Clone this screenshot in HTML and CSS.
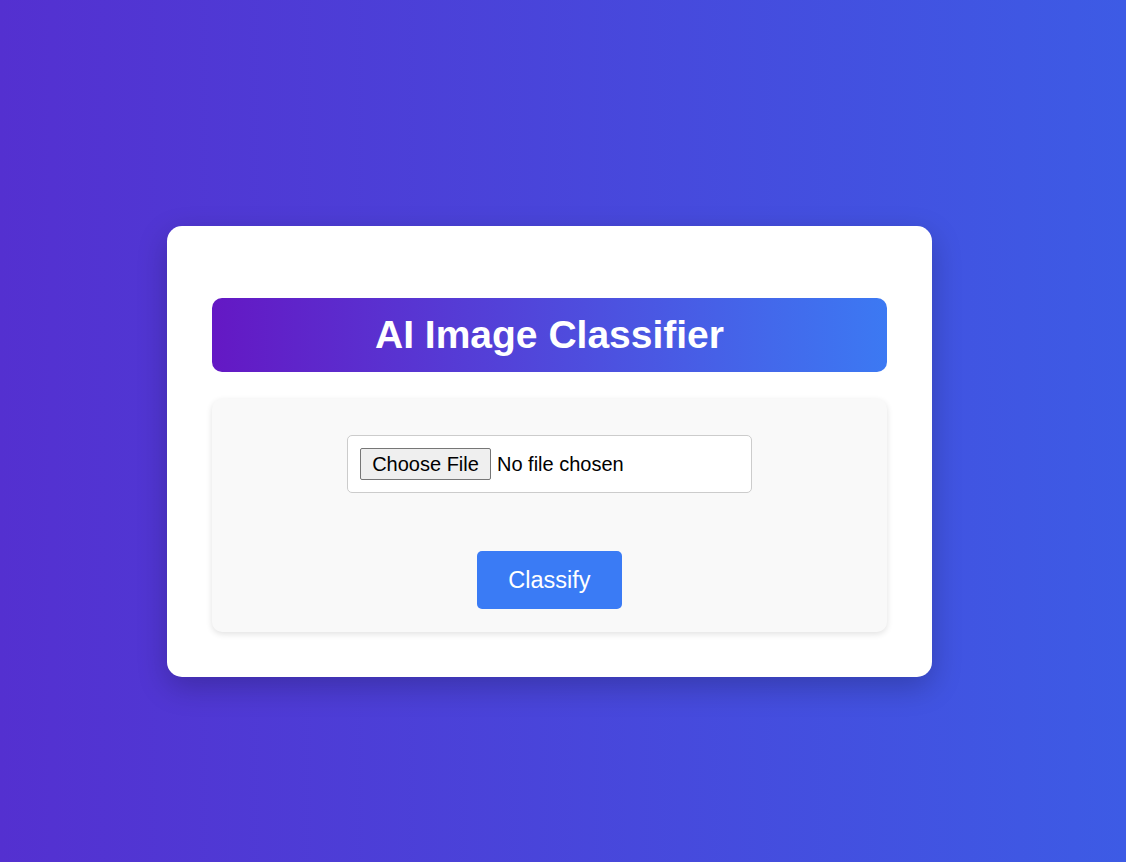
FILE: index.html
```html
<!DOCTYPE html>
<html lang="en">
<head>
<meta charset="utf-8">
<title>AI Image Classifier</title>
<link rel="stylesheet" href="styles.css">
</head>
<body>
<main class="page">
  <section class="card">
    <h1 class="title">AI Image Classifier</h1>
    <form class="upload" onsubmit="return false;">
      <div class="file-box"><input class="file" type="file" accept="image/*"></div>
      <button class="classify" type="submit">Classify</button>
    </form>
  </section>
</main>
</body>
</html>
```

FILE: styles.css
```css
html, body {
  margin: 0;
  height: 100%;
}
body {
  font-family: "Liberation Sans", Arial, sans-serif;
  background: linear-gradient(to right, #5430d0, #3d5be5);
}
.page {
  box-sizing: border-box;
  height: 100%;
  padding: 226px 0 0 167px;
}
.card {
  box-sizing: border-box;
  width: 765px;
  padding: 72px 45px 45px;
  background: #fff;
  border-radius: 15px;
  box-shadow: 0 10px 30px rgba(0, 0, 0, 0.22);
}
.title {
  margin: 0;
  height: 74px;
  display: flex;
  align-items: center;
  justify-content: center;
  border-radius: 10px;
  background: linear-gradient(to right, #6418c4, #3c79f3);
  color: #fff;
  font-size: 39px;
  font-weight: bold;
}
.upload {
  margin-top: 27px;
  padding: 36px 0 23px;
  background: #f9f9f9;
  border-radius: 10px;
  box-shadow: 0 2px 6px rgba(0, 0, 0, 0.12);
  display: flex;
  flex-direction: column;
  align-items: center;
  gap: 58px;
}
.file-box {
  box-sizing: border-box;
  width: 405px;
  height: 58px;
  padding: 0 12px;
  display: flex;
  align-items: center;
  background: #fff;
  border: 1px solid #ccc;
  border-radius: 5px;
}
.file {
  font-family: "Liberation Sans", Arial, sans-serif;
  font-size: 20px;
  color: #000;
}
.file::file-selector-button {
  box-sizing: border-box;
  height: 32px;
  width: 131px;
  margin: 0 6px 0 0;
  padding: 0;
  font-family: "Liberation Sans", Arial, sans-serif;
  font-size: 20px;
  color: #000;
  background: #efefef;
  border: 1px solid #767676;
  border-radius: 2px;
}
.classify {
  width: 145px;
  height: 58px;
  border: none;
  border-radius: 5px;
  background: #3a7bf5;
  color: #fff;
  font-family: "Liberation Sans", Arial, sans-serif;
  font-size: 23.5px;
  cursor: pointer;
}
```
